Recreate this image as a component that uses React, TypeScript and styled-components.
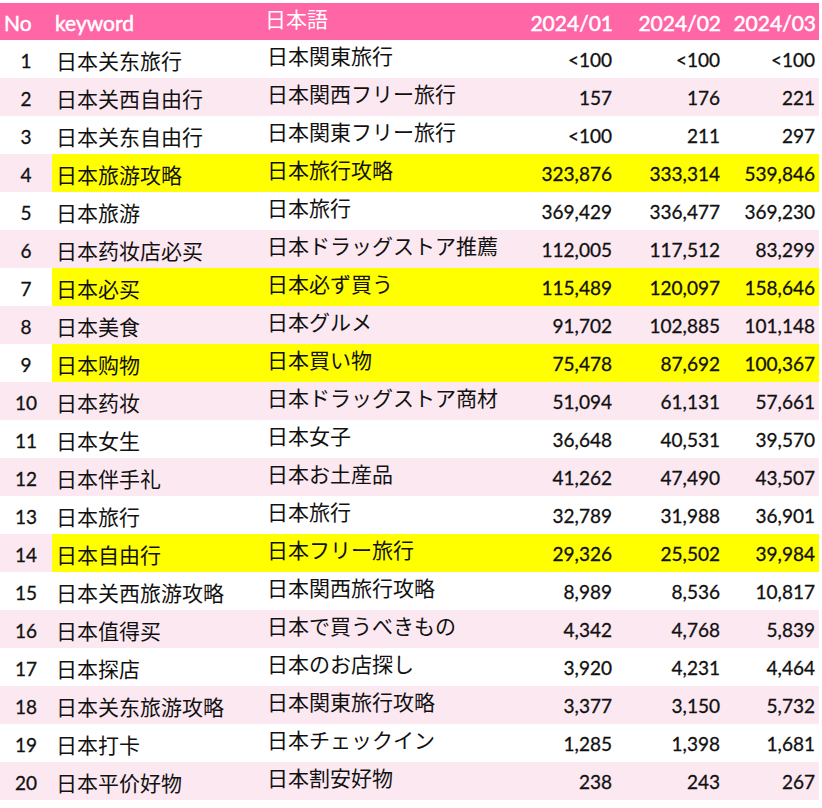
import React from "react";
import styled, { createGlobalStyle } from "styled-components";

const Global = createGlobalStyle`
  html, body { margin: 0; padding: 0; background: #ffffff; }
  body { font-family: Lato, "Noto Sans CJK SC", sans-serif; color: #111; }
`;

const COLS = "52px 211px 253px 100px 108px 95px";

const Page = styled.div`
  padding-top: 3px;
  width: 819px;
`;

const Header = styled.div`
  display: grid;
  grid-template-columns: ${COLS};
  height: 37px;
  background: #ff66a6;
  color: #ffffff;
  font-family: Lato, "Noto Sans CJK SC", sans-serif;
  font-weight: 400;
  font-size: 21px;
  -webkit-text-stroke: 0.5px #ffffff;
`;

const HeadCell = styled.div<{ $align?: "left" | "right"; $cjk?: boolean; $pad?: number }>`
  display: flex;
  align-items: center;
  justify-content: ${(p) => (p.$align === "right" ? "flex-end" : "flex-start")};
  padding: ${(p) => (p.$align === "right" ? "0 3px 0 0" : `0 0 0 ${p.$pad ?? 4}px`)};
  ${(p) =>
    p.$cjk
      ? `font-family: "Noto Sans CJK JP", sans-serif; font-weight: 400; font-size: 21px; padding-bottom: 8px; -webkit-text-stroke: 0;`
      : ""}
  white-space: nowrap;
`;

const Row = styled.div<{ $striped: boolean }>`
  display: grid;
  grid-template-columns: ${COLS};
  height: 38px;
  background: ${(p) => (p.$striped ? "#fce8f1" : "#ffffff")};
`;

const Cell = styled.div<{ $hl?: boolean }>`
  display: flex;
  align-items: center;
  background: ${(p) => (p.$hl ? "#ffff00" : "transparent")};
  white-space: nowrap;
  overflow: hidden;
`;

const NoCell = styled(Cell)`
  justify-content: center;
  font-family: Lato, sans-serif;
  font-size: 19px;
  padding-top: 2px;
  -webkit-text-stroke: 0.3px #111;
`;

const KeywordCell = styled(Cell)`
  padding-left: 4px;
  font-family: "Noto Sans CJK SC", sans-serif;
  font-size: 21px;
  padding-top: 1px;
`;

const JaCell = styled(Cell)`
  padding-left: 4px;
  font-family: "Noto Sans CJK JP", sans-serif;
  font-size: 21px;
  padding-bottom: 8px;
`;

const NumCell = styled(Cell)`
  justify-content: flex-end;
  padding-right: 4px;
  font-family: Lato, sans-serif;
  font-size: 19px;
  padding-top: 1px;
  -webkit-text-stroke: 0.3px #111;
`;

type R = {
  no: number;
  kw: string;
  ja: string;
  a: string;
  b: string;
  c: string;
  hl?: boolean;
};

const rows: R[] = [
  { no: 1, kw: "日本关东旅行", ja: "日本関東旅行", a: "<100", b: "<100", c: "<100" },
  { no: 2, kw: "日本关西自由行", ja: "日本関西フリー旅行", a: "157", b: "176", c: "221" },
  { no: 3, kw: "日本关东自由行", ja: "日本関東フリー旅行", a: "<100", b: "211", c: "297" },
  { no: 4, kw: "日本旅游攻略", ja: "日本旅行攻略", a: "323,876", b: "333,314", c: "539,846", hl: true },
  { no: 5, kw: "日本旅游", ja: "日本旅行", a: "369,429", b: "336,477", c: "369,230" },
  { no: 6, kw: "日本药妆店必买", ja: "日本ドラッグストア推薦", a: "112,005", b: "117,512", c: "83,299" },
  { no: 7, kw: "日本必买", ja: "日本必ず買う", a: "115,489", b: "120,097", c: "158,646", hl: true },
  { no: 8, kw: "日本美食", ja: "日本グルメ", a: "91,702", b: "102,885", c: "101,148" },
  { no: 9, kw: "日本购物", ja: "日本買い物", a: "75,478", b: "87,692", c: "100,367", hl: true },
  { no: 10, kw: "日本药妆", ja: "日本ドラッグストア商材", a: "51,094", b: "61,131", c: "57,661" },
  { no: 11, kw: "日本女生", ja: "日本女子", a: "36,648", b: "40,531", c: "39,570" },
  { no: 12, kw: "日本伴手礼", ja: "日本お土産品", a: "41,262", b: "47,490", c: "43,507" },
  { no: 13, kw: "日本旅行", ja: "日本旅行", a: "32,789", b: "31,988", c: "36,901" },
  { no: 14, kw: "日本自由行", ja: "日本フリー旅行", a: "29,326", b: "25,502", c: "39,984", hl: true },
  { no: 15, kw: "日本关西旅游攻略", ja: "日本関西旅行攻略", a: "8,989", b: "8,536", c: "10,817" },
  { no: 16, kw: "日本值得买", ja: "日本で買うべきもの", a: "4,342", b: "4,768", c: "5,839" },
  { no: 17, kw: "日本探店", ja: "日本のお店探し", a: "3,920", b: "4,231", c: "4,464" },
  { no: 18, kw: "日本关东旅游攻略", ja: "日本関東旅行攻略", a: "3,377", b: "3,150", c: "5,732" },
  { no: 19, kw: "日本打卡", ja: "日本チェックイン", a: "1,285", b: "1,398", c: "1,681" },
  { no: 20, kw: "日本平价好物", ja: "日本割安好物", a: "238", b: "243", c: "267" },
];

export default function App() {
  return (
    <Page>
      <Global />
      <Header>
        <HeadCell>No</HeadCell>
        <HeadCell $pad={3}>keyword</HeadCell>
        <HeadCell $cjk $pad={2}>日本語</HeadCell>
        <HeadCell $align="right">2024/01</HeadCell>
        <HeadCell $align="right">2024/02</HeadCell>
        <HeadCell $align="right">2024/03</HeadCell>
      </Header>
      {rows.map((r) => (
        <Row key={r.no} $striped={r.no % 2 === 0}>
          <NoCell>{r.no}</NoCell>
          <KeywordCell $hl={r.hl}>{r.kw}</KeywordCell>
          <JaCell $hl={r.hl}>{r.ja}</JaCell>
          <NumCell $hl={r.hl}>{r.a}</NumCell>
          <NumCell $hl={r.hl}>{r.b}</NumCell>
          <NumCell $hl={r.hl}>{r.c}</NumCell>
        </Row>
      ))}
    </Page>
  );
}
